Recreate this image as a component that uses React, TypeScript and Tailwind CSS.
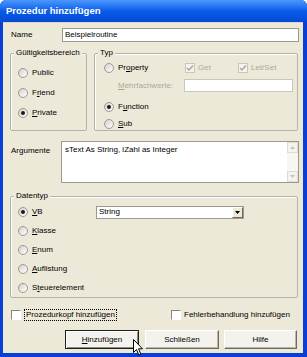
import type { ReactNode } from "react";

const Radio = ({ checked }: { checked?: boolean }) => (
  <span className="w-[10px] h-[10px] rounded-full border border-[#9a9a94] bg-gradient-to-br from-[#d3d1c8] to-white flex items-center justify-center shrink-0">
    {checked && <span className="w-[4px] h-[4px] rounded-full bg-[#1a1a1a]" />}
  </span>
);

const Option = ({ label, checked }: { label: ReactNode; checked?: boolean }) => (
  <div className="flex items-center gap-[4px] h-[12px]">
    <Radio checked={checked} />
    <span>{label}</span>
  </div>
);

const Check = ({ checked, disabled }: { checked?: boolean; disabled?: boolean }) => (
  <span
    className={
      disabled
        ? "w-[10px] h-[10px] border border-[#c9c7ba] bg-[#f4f3ee] flex items-center justify-center shrink-0"
        : "w-[10px] h-[10px] border border-t-[#8a887e] border-l-[#8a887e] border-b-white border-r-white bg-white flex items-center justify-center shrink-0"
    }
  >
    {checked && (
      <svg width="8" height="8" viewBox="0 0 8 8">
        <path d="M1 4 L3 6 L7 1.5" fill="none" stroke="#aca899" strokeWidth="1.5" />
      </svg>
    )}
  </span>
);

const Button = ({ children, primary, w }: { children: ReactNode; primary?: boolean; w: string }) => (
  <div
    className={
      "h-[19px] flex items-center justify-center bg-[#f3f2ec] border " +
      w +
      (primary
        ? " border-[#1e1e1e] shadow-[inset_1px_1px_0_white,inset_-1px_-1px_0_#8f8d82]"
        : " border-t-white border-l-white border-b-[#6d6b60] border-r-[#6d6b60] shadow-[inset_-1px_-1px_0_#b9b7aa]")
    }
  >
    {children}
  </div>
);

const Group = ({ title, className, children }: { title: string; className: string; children: ReactNode }) => (
  <fieldset className={"border border-[#b5b3a6] rounded-[2px] shadow-[inset_1px_1px_0_white] " + className}>
    <legend className="ml-[3px] px-[2px] leading-[10px] bg-[#ece9d8]">{title}</legend>
    {children}
  </fieldset>
);

export default function App() {
  return (
    <div className="relative w-[307px] h-[357px] flex flex-col bg-[#0a3fd6] rounded-t-[6px] overflow-hidden font-['Liberation_Sans',Arial,sans-serif] text-[8px] text-black">
      <div className="h-[22px] shrink-0 flex items-center pl-[6px] bg-gradient-to-b from-[#4a97fb] via-[#0a5ceb] to-[#0449d4] text-white font-bold text-[9.5px]">
        Prozedur hinzufügen
      </div>
      <div className="flex-1 ml-[3px] mr-[4px] mb-[4px] bg-[#ece9d8] flex flex-col pl-[7px] pr-[5px] border-t border-[#d9d6c4]">
        {/* Name */}
        <div className="mt-[5px] h-[14px] flex items-center">
          <span className="w-[52px] pl-[1px]">Name</span>
          <div className="flex-1 h-[14px] -mr-[1px] bg-white border border-[#9c9a90] flex items-center pl-[2px]">
            Beispielroutine
          </div>
        </div>

        {/* Gültigkeitsbereich + Typ */}
        <div className="mt-[6px] flex gap-[7px]">
          <Group title="Gültigkeitsbereich" className="w-[77px] h-[83px]">
            <div className="flex flex-col gap-[8px] pl-[7px] pt-[9px]">
              <Option label="Public" />
              <Option label={<>F<u>r</u>iend</>} />
              <Option label={<><u>P</u>rivate</>} checked />
            </div>
          </Group>
          <Group title="Typ" className="flex-1 h-[83px]">
            <div className="flex flex-col pl-[9px] pt-[4px]">
              <div className="flex items-center h-[12px]">
                <div className="w-[81px]">
                  <Option label={<>Pr<u>o</u>perty</>} />
                </div>
                <div className="w-[53px] flex items-center gap-[3px] text-[#aca899]">
                  <Check checked disabled />
                  <span>Get</span>
                </div>
                <div className="flex items-center gap-[3px] text-[#aca899]">
                  <Check checked disabled />
                  <span>Let/Set</span>
                </div>
              </div>
              <div className="mt-[5px] h-[13px] flex items-center">
                <span className="w-[80px] pl-[14px] text-[#aca899]">
                  <u>M</u>ehrfachwerte:
                </span>
                <div className="w-[109px] h-[13px] bg-white border border-[#c9c7ba]" />
              </div>
              <div className="mt-[9px]">
                <Option label={<>F<u>u</u>nction</>} checked />
              </div>
              <div className="mt-[5px]">
                <Option label={<><u>S</u>ub</>} />
              </div>
            </div>
          </Group>
        </div>

        {/* Argumente */}
        <div className="mt-[10px] flex">
          <span className="w-[51px] pl-[1px] pt-[4px]">Argumente</span>
          <div className="flex-1 -mr-[1px] h-[42px] bg-white border border-[#9c9a90] flex">
            <div className="flex-1 pl-[3px] pt-[2px] leading-[11px]">sText As String, iZahl as Integer</div>
            <div className="w-[11px] flex flex-col bg-[#f7f6f1]">
              <div className="h-[11px] border border-[#dedcd2] bg-[#f4f3ee] flex items-center justify-center">
                <svg width="5" height="3" viewBox="0 0 5 3">
                  <path d="M0 3 L2.5 0 L5 3 Z" fill="#c6c4b8" />
                </svg>
              </div>
              <div className="flex-1" />
              <div className="h-[11px] border border-[#dedcd2] bg-[#f4f3ee] flex items-center justify-center">
                <svg width="5" height="3" viewBox="0 0 5 3">
                  <path d="M0 0 L2.5 3 L5 0 Z" fill="#c6c4b8" />
                </svg>
              </div>
            </div>
          </div>
        </div>

        {/* Datentyp */}
        <Group title="Datentyp" className="mt-[8px] h-[107px]">
          <div className="flex flex-col gap-[7px] pl-[7px] pt-[5px]">
            <div className="flex items-center h-[12px]">
              <div className="w-[78px]">
                <Option label={<><u>V</u>B</>} checked />
              </div>
              <div className="w-[148px] h-[13px] bg-white border border-[#9c9a90] flex items-center pl-[2px]">
                <span className="flex-1">String</span>
                <div className="w-[11px] h-[11px] bg-[#ece9d8] border border-t-white border-l-white border-b-[#6d6b60] border-r-[#6d6b60] flex items-center justify-center">
                  <svg width="5" height="3" viewBox="0 0 5 3">
                    <path d="M0 0 L2.5 3 L5 0 Z" fill="#000" />
                  </svg>
                </div>
              </div>
            </div>
            <Option label={<><u>K</u>lasse</>} />
            <Option label={<><u>E</u>num</>} />
            <Option label={<><u>A</u>uflistung</>} />
            <Option label={<>S<u>t</u>euerelement</>} />
          </div>
        </Group>

        {/* Checkboxes */}
        <div className="mt-[11px] h-[12px] flex items-center">
          <div className="w-[161px] flex items-center gap-[3px] pl-[1px]">
            <Check />
            <span className="border border-dotted border-black px-[1px] leading-[10px]">Prozedurkopf hinzufügen</span>
          </div>
          <div className="flex items-center gap-[3px]">
            <Check />
            <span>Fehlerbehandlung hinzufügen</span>
          </div>
        </div>

        {/* Buttons */}
        <div className="mt-[9px] flex justify-end mr-[1px]">
          <Button primary w="w-[74px]">
            <span>
              <u>H</u>inzufügen
            </span>
          </Button>
          <div className="ml-[6px]">
            <Button w="w-[74px]">Schließen</Button>
          </div>
          <div className="ml-[5px]">
            <Button w="w-[73px]">Hilfe</Button>
          </div>
        </div>
      </div>

      <svg className="absolute left-[133px] top-[339px]" width="11" height="18" viewBox="0 0 11 18">
        <path d="M0.5 0.5 L0.5 13.5 L3.5 10.5 L5.8 16 L7.8 15.2 L5.6 9.8 L9.5 9.8 Z" fill="white" stroke="black" strokeWidth="1" />
      </svg>
    </div>
  );
}
